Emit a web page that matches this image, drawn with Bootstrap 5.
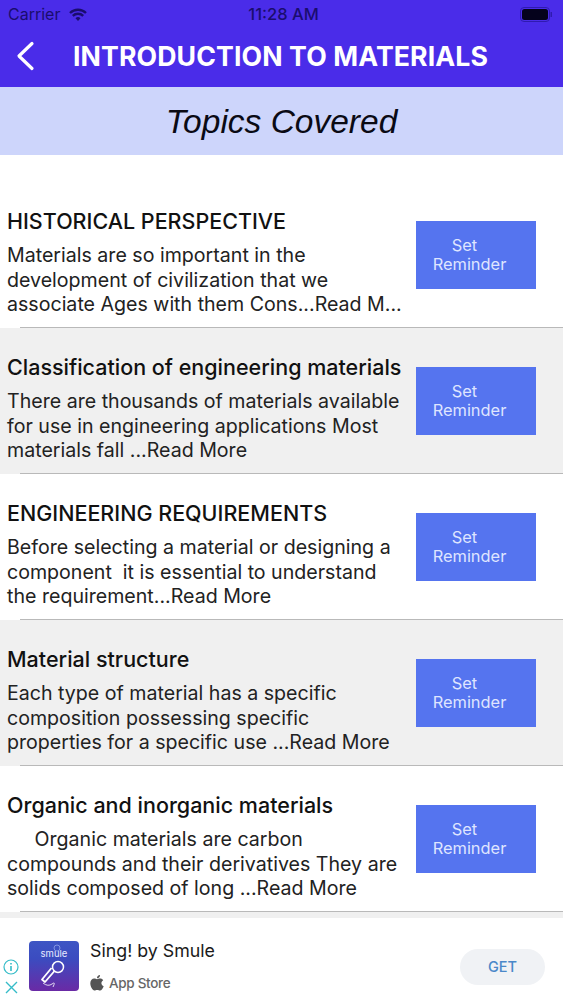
<!DOCTYPE html>
<html lang="en">
<head>
<meta charset="utf-8">
<title>Topics Covered</title>
<link rel="stylesheet" href="https://cdn.jsdelivr.net/npm/bootstrap@5.3.0/dist/css/bootstrap.min.css">
<style>
html,body{height:1000px;overflow:hidden;background:#fff;font-family:Inter,"Liberation Sans",sans-serif;color:#111}
.app-frame{height:1000px}
.top-band{height:87px;background:#4a2ce9;flex:none}
.status-row{height:29px;padding:0 10px 0 8px;color:#1a0d6e;font-size:16px;line-height:29px}
.status-clock{font-weight:500;font-size:16.500px;margin-left:2px}
.nav-row{height:54px;padding-left:16px}
.nav-heading{font-size:26.7px;font-weight:700;color:#fff;margin:0 0 0 37px;line-height:1;letter-spacing:.1px;white-space:nowrap}
.sub-band{height:68px;flex:none;background:#cdd5fb;font-family:"Liberation Sans",sans-serif;font-size:33.5px;font-style:italic;line-height:70px;color:#0a0a14}
.topic-list{padding-top:27px}
.topic-row{height:146px;position:relative;padding:26px 27px 0 7px}
.topic-row::after{content:"";position:absolute;left:20px;right:0;bottom:0;height:1px;background:#b9b9b9}
.topic-alt{background:#f0f0f0}
.topic-copy{width:382px}
.topic-name{font-size:21.5px;font-weight:500;line-height:26px;margin:0 0 9px;white-space:nowrap;letter-spacing:0}
.topic-text{font-size:19.6px;line-height:24.5px;margin:0;color:#222;white-space:nowrap}
.remind-btn{width:120px;height:68px;margin-top:13px;background:#5574ef;border:0;border-radius:0;color:#dfe5ff;font-size:16.4px;line-height:19.5px;padding:0 13px 0 0}
.remind-btn:hover{background:#5574ef;color:#dfe5ff}
.set-word{display:block;padding-right:10px}
.stub-row{height:6px;background:#f0f0f0}
.ad-bar{height:82px;flex:none;background:#fff;position:relative;padding:23px 18px 0 29px}
.ad-icon{width:50px;height:50px;border-radius:4px;background:linear-gradient(#3d55c4 0,#3b4cc0 35%,#6a2aa5 100%);flex:none}
.ad-body{margin-left:11px}
.ad-name{font-size:17.800px;line-height:22px;margin:-1px 0 0;color:#1a1a1a}
.ad-store{font-size:13.500px;line-height:18px;color:#666;margin-top:12px;font-weight:500;letter-spacing:-.3px}
.ad-store svg{margin-right:1px}
.ad-get{width:85px;height:36px;border-radius:18px;background:#f0f2f5;color:#4a88c9;font-size:14.500px;line-height:36px;text-align:center;font-weight:500;margin-top:8px}
.ad-marks{position:absolute;left:3px;top:41px;width:16px;gap:6px}
</style>
</head>
<body>
<div class="app-frame d-flex flex-column">
  <div class="top-band">
    <div class="status-row d-flex align-items-center justify-content-between position-relative">
      <span class="d-flex align-items-center gap-2">Carrier
        <svg width="20" height="14" viewBox="0 0 18 14"><path d="M1 5a11.500 11.500 0 0 1 16 0M3.800 7.800a7.500 7.500 0 0 1 10.400 0" fill="none" stroke="#1a0d6e" stroke-width="2.400"/><path d="M6.500 10.300a3.500 3.500 0 0 1 5 0L9 13z" fill="#1a0d6e"/></svg>
      </span>
      <span class="status-clock position-absolute start-50 translate-middle-x">11:28 AM</span>
      <svg width="33" height="15" viewBox="0 0 33 15"><rect x=".5" y=".5" width="29" height="14" rx="3.500" fill="none" stroke="#2f1bb0"/><rect x="2" y="2" width="26" height="11" rx="2.500" fill="#05021c"/><rect x="30.500" y="5" width="1.500" height="5" fill="#2f1bb0"/></svg>
    </div>
    <div class="nav-row d-flex align-items-center">
      <svg width="20" height="30" viewBox="0 0 20 30"><path d="M16 2.500 3 15l13 12.500" fill="none" stroke="#fff" stroke-width="3.200" stroke-linecap="round" stroke-linejoin="round"/></svg>
      <h1 class="nav-heading">INTRODUCTION TO MATERIALS</h1>
    </div>
  </div>
  <div class="sub-band text-center">Topics Covered</div>
  <div class="topic-list flex-grow-1">
    <div class="topic-row d-flex justify-content-between">
      <div class="topic-copy"><h2 class="topic-name">HISTORICAL PERSPECTIVE</h2><p class="topic-text">Materials are so important in the<br>development of civilization that we<br>associate Ages with them Cons...Read M...</p></div>
      <button class="btn remind-btn"><span class="set-word">Set</span>Reminder</button>
    </div>
    <div class="topic-row topic-alt d-flex justify-content-between">
      <div class="topic-copy"><h2 class="topic-name">Classification of engineering materials</h2><p class="topic-text">There are thousands of materials available<br>for use in engineering applications Most<br>materials fall ...Read More</p></div>
      <button class="btn remind-btn"><span class="set-word">Set</span>Reminder</button>
    </div>
    <div class="topic-row d-flex justify-content-between">
      <div class="topic-copy"><h2 class="topic-name">ENGINEERING REQUIREMENTS</h2><p class="topic-text">Before selecting a material or designing a<br>component &nbsp;it is essential to understand<br>the requirement...Read More</p></div>
      <button class="btn remind-btn"><span class="set-word">Set</span>Reminder</button>
    </div>
    <div class="topic-row topic-alt d-flex justify-content-between">
      <div class="topic-copy"><h2 class="topic-name">Material structure</h2><p class="topic-text">Each type of material has a specific<br>composition possessing specific<br>properties for a specific use ...Read More</p></div>
      <button class="btn remind-btn"><span class="set-word">Set</span>Reminder</button>
    </div>
    <div class="topic-row d-flex justify-content-between">
      <div class="topic-copy"><h2 class="topic-name">Organic and inorganic materials</h2><p class="topic-text">&nbsp; &nbsp; &nbsp;Organic materials are carbon<br>compounds and their derivatives They are<br>solids composed of long ...Read More</p></div>
      <button class="btn remind-btn"><span class="set-word">Set</span>Reminder</button>
    </div>
    <div class="stub-row"></div>
  </div>
  <div class="ad-bar d-flex">
    <div class="ad-marks d-flex flex-column align-items-center">
      <svg width="16" height="16" viewBox="0 0 16 16"><circle cx="8" cy="8" r="7" fill="none" stroke="#35bcc8" stroke-width="1.200"/><path d="M8 7v5M8 4v1.500" stroke="#35bcc8" stroke-width="1.600"/></svg>
      <svg width="13" height="13" viewBox="0 0 13 13"><path d="M1 1l11 11M12 1 1 12" stroke="#35bcc8" stroke-width="1.400"/></svg>
    </div>
    <div class="ad-icon">
      <svg width="50" height="50" viewBox="0 0 50 50"><text x="25" y="16" text-anchor="middle" fill="#e8eaff" font-size="9.500" font-family="Inter,sans-serif">smule</text><circle cx="28" cy="7" r="3" fill="none" stroke="#9fb0ee" stroke-width=".7"/><circle cx="29" cy="26" r="5.500" fill="none" stroke="#fff" stroke-width="1.500"/><path d="M25.500 30 16 41l-3-2.500 9.500-11.500" fill="none" stroke="#fff" stroke-width="1.800" stroke-linejoin="round"/><path d="M14 42q5 4 9 1t1 3" fill="none" stroke="#fff" stroke-width=".8"/></svg>
    </div>
    <div class="ad-body flex-grow-1">
      <p class="ad-name">Sing! by Smule</p>
      <div class="ad-store d-flex align-items-center gap-1">
        <svg width="14" height="16" viewBox="0 0 14 16"><path d="M10 0c.2 1.600-1.300 3.300-3 3.200C6.800 1.700 8.400.1 10 0zM7 4.200c.8 0 1.800-.7 3.200-.7 1.200 0 2.400.6 3 1.700-2.600 1.500-2.200 5 .5 6-.8 2-2.200 4.300-3.700 4.300-1 0-1.500-.6-2.800-.6s-1.800.6-2.800.6C2.500 15.500.3 11.500.3 8.300c0-3 2-4.700 3.800-4.700 1.300 0 2.200.6 2.900.6z" fill="#555"/></svg>
        App Store
      </div>
    </div>
    <div class="ad-get">GET</div>
  </div>
</div>
<script src="https://cdn.jsdelivr.net/npm/bootstrap@5.3.0/dist/js/bootstrap.bundle.min.js"></script>
</body>
</html>
